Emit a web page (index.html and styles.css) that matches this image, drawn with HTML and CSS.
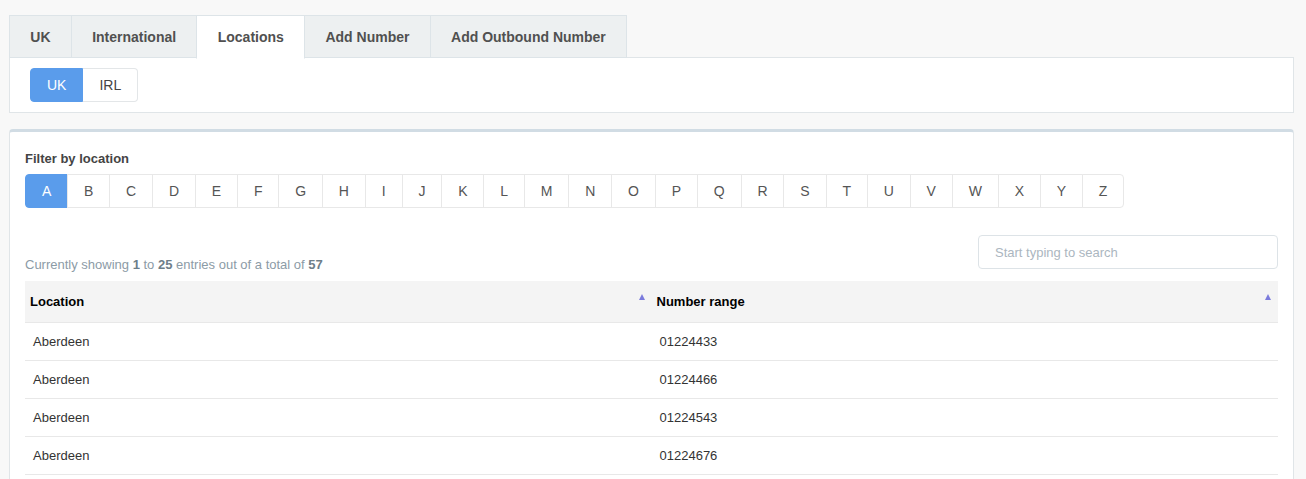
FILE: index.html
```html
<!DOCTYPE html>
<html lang="en">
<head>
<meta charset="utf-8">
<title>Locations</title>
<link rel="stylesheet" href="styles.css">
</head>
<body>
<div class="page">
  <div class="tabs">
    <div class="tab">UK</div>
    <div class="tab">International</div>
    <div class="tab active">Locations</div>
    <div class="tab">Add Number</div>
    <div class="tab">Add Outbound Number</div>
  </div>
  <div class="panel top-panel">
    <div class="btn-group">
      <button class="btn on">UK</button>
      <button class="btn">IRL</button>
    </div>
  </div>
  <div class="panel main-panel">
    <div class="label">Filter by location</div>
    <div class="letters">
      <button class="letter on">A</button><button class="letter">B</button><button class="letter">C</button><button class="letter">D</button><button class="letter">E</button><button class="letter">F</button><button class="letter">G</button><button class="letter">H</button><button class="letter">I</button><button class="letter">J</button><button class="letter">K</button><button class="letter">L</button><button class="letter">M</button><button class="letter">N</button><button class="letter">O</button><button class="letter">P</button><button class="letter">Q</button><button class="letter">R</button><button class="letter">S</button><button class="letter">T</button><button class="letter">U</button><button class="letter">V</button><button class="letter">W</button><button class="letter">X</button><button class="letter">Y</button><button class="letter">Z</button>
    </div>
    <div class="toolbar">
      <div class="info">Currently showing <b>1</b> to <b>25</b> entries out of a total of <b>57</b></div>
      <input class="search" type="text" placeholder="Start typing to search">
    </div>
    <table class="grid">
      <thead>
        <tr>
          <th><span>Location</span><i class="sort"></i></th>
          <th><span>Number range</span><i class="sort"></i></th>
        </tr>
      </thead>
      <tbody>
        <tr><td>Aberdeen</td><td>01224433</td></tr>
        <tr><td>Aberdeen</td><td>01224466</td></tr>
        <tr><td>Aberdeen</td><td>01224543</td></tr>
        <tr><td>Aberdeen</td><td>01224676</td></tr>
      </tbody>
    </table>
  </div>
</div>
</body>
</html>
```

FILE: styles.css
```css
* { box-sizing: border-box; }
html, body { margin: 0; padding: 0; }
body {
  background: #f8f8f8;
  font-family: "Liberation Sans", Arial, Helvetica, sans-serif;
  color: #444;
  overflow: hidden;
}
.page { padding: 15px 12px 0 9px; }

.tabs { display: flex; height: 43px; position: relative; z-index: 1; }
.tab {
  height: 43px;
  padding: 0 20.3px;
  display: flex;
  align-items: center;
  background: #edf0f1;
  border: 1px solid #dde4e8;
  margin-left: -1px;
  font-size: 14px;
  font-weight: bold;
  color: #505050;
}
.tab:first-child { margin-left: 0; }
.tab.active { background: #fff; border-bottom-color: #fff; height: 44px; }

.panel {
  background: #fff;
  border: 1px solid #e0e5e8;
}
.top-panel { margin-top: -1px; padding: 10px 20px 10px; }
.btn-group { display: flex; }
.btn {
  height: 34px;
  padding: 0 16px;
  border: 1px solid #e3e6e8;
  background: #fff;
  font-family: inherit;
  font-size: 14px;
  color: #444;
  margin: 0;
}
.btn + .btn { border-left: none; border-radius: 0 4px 4px 0; }
.btn.on { background: #5a9ceb; border-color: #5a9ceb; color: #fff; border-radius: 4px 0 0 4px; }

.main-panel {
  margin-top: 16px;
  border-top: 3px solid #d1dce4;
  border-radius: 4px 4px 0 0;
  padding: 18px 15px 0;
  min-height: 360px;
}
.label { font-size: 13px; font-weight: bold; color: #444; line-height: 18px; margin-bottom: 6px; }
.letters { display: flex; }
.letter {
  height: 34px;
  padding: 0 15.88px;
  margin: 0 0 0 -1px;
  border: 1px solid #e8e8e8;
  background: #fff;
  font-family: inherit;
  font-size: 14px;
  color: #555;
}
.letter:first-child { margin-left: 0; border-radius: 4px 0 0 4px; }
.letter:last-child { border-radius: 0 4px 4px 0; }
.letter.on { background: #5a9ceb; border-color: #5a9ceb; color: #fff; }

.toolbar {
  display: flex;
  justify-content: space-between;
  align-items: flex-end;
  margin-top: 27px;
}
.info { font-size: 13px; color: #8c9ba6; line-height: 16px; margin-bottom: -4px; }
.info b { color: #6e7e89; }
.search {
  width: 300px;
  height: 34px;
  border: 1px solid #dde3e7;
  border-radius: 4px;
  padding: 0 16px;
  font-family: inherit;
  font-size: 13px;
  color: #444;
  outline: none;
}
.search::placeholder { color: #abb6c0; }

.grid { width: 100%; border-collapse: collapse; margin-top: 12px; table-layout: fixed; }
.grid th {
  background: #f4f4f4;
  height: 41px;
  text-align: left;
  font-size: 13px;
  font-weight: bold;
  color: #000;
  padding: 0 5px;
  position: relative;
  border-bottom: 1px solid #e8e8e8;
}
.sort {
  position: absolute;
  right: 7px;
  top: 13px;
  width: 0; height: 0;
  border-left: 3.5px solid transparent;
  border-right: 3.5px solid transparent;
  border-bottom: 6px solid #7b7bdc;
}
.grid td {
  height: 38px;
  padding: 0 8px;
  font-size: 13px;
  color: #333;
  border-bottom: 1px solid #e8e8e8;
}
```
